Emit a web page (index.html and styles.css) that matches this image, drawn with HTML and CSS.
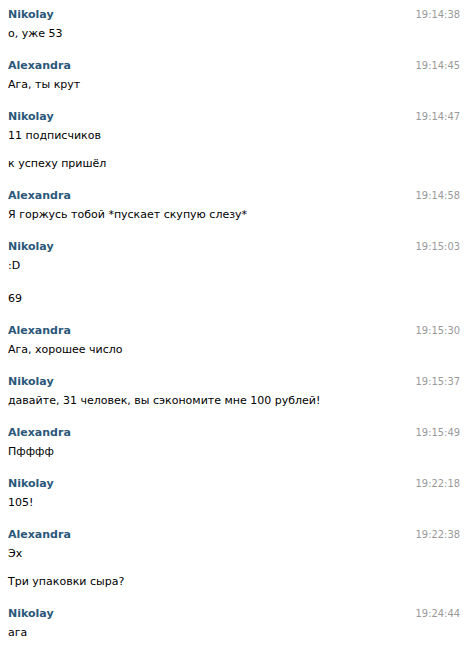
FILE: index.html
```html
<!DOCTYPE html>
<html lang="ru">
<head>
<meta charset="utf-8">
<title>Диалог</title>
<link rel="stylesheet" href="styles.css">
</head>
<body>
<div class="log">
  <div class="msg">
    <div class="head"><span class="name">Nikolay</span><span class="time">19:14:38</span></div>
    <div class="text">о, уже 53</div>
  </div>
  <div class="msg">
    <div class="head"><span class="name">Alexandra</span><span class="time">19:14:45</span></div>
    <div class="text">Ага, ты крут</div>
  </div>
  <div class="msg">
    <div class="head"><span class="name">Nikolay</span><span class="time">19:14:47</span></div>
    <div class="text">11 подписчиков</div>
    <div class="text">к успеху пришёл</div>
  </div>
  <div class="msg">
    <div class="head"><span class="name">Alexandra</span><span class="time">19:14:58</span></div>
    <div class="text">Я горжусь тобой *пускает скупую слезу*</div>
  </div>
  <div class="msg">
    <div class="head"><span class="name">Nikolay</span><span class="time">19:15:03</span></div>
    <div class="text smile">:D</div>
    <div class="text">69</div>
  </div>
  <div class="msg">
    <div class="head"><span class="name">Alexandra</span><span class="time">19:15:30</span></div>
    <div class="text">Ага, хорошее число</div>
  </div>
  <div class="msg">
    <div class="head"><span class="name">Nikolay</span><span class="time">19:15:37</span></div>
    <div class="text">давайте, 31 человек, вы сэкономите мне 100 рублей!</div>
  </div>
  <div class="msg">
    <div class="head"><span class="name">Alexandra</span><span class="time">19:15:49</span></div>
    <div class="text">Пфффф</div>
  </div>
  <div class="msg">
    <div class="head"><span class="name">Nikolay</span><span class="time">19:22:18</span></div>
    <div class="text">105!</div>
  </div>
  <div class="msg">
    <div class="head"><span class="name">Alexandra</span><span class="time">19:22:38</span></div>
    <div class="text">Эх</div>
    <div class="text">Три упаковки сыра?</div>
  </div>
  <div class="msg">
    <div class="head"><span class="name">Nikolay</span><span class="time">19:24:44</span></div>
    <div class="text">ага</div>
  </div>
</div>
</body>
</html>
```

FILE: styles.css
```css
html, body {
  margin: 0;
  padding: 0;
  background: #ffffff;
}

body {
  font-family: "DejaVu Sans", sans-serif;
  font-size: 11px;
  line-height: 14px;
  color: #000000;
}

.log {
  display: flex;
  flex-direction: column;
}

.msg {
  display: flex;
  flex-direction: column;
  padding: 8px 15px 10px 8px;
}

.head {
  display: flex;
  justify-content: space-between;
  align-items: baseline;
  margin-bottom: 5px;
}

.name {
  font-weight: bold;
  color: #2b587a;
}

.time {
  font-family: "DejaVu Sans Condensed", "DejaVu Sans", sans-serif;
  color: #999999;
}

.text + .text {
  margin-top: 14px;
}

.smile {
  padding-bottom: 5px;
}
```
